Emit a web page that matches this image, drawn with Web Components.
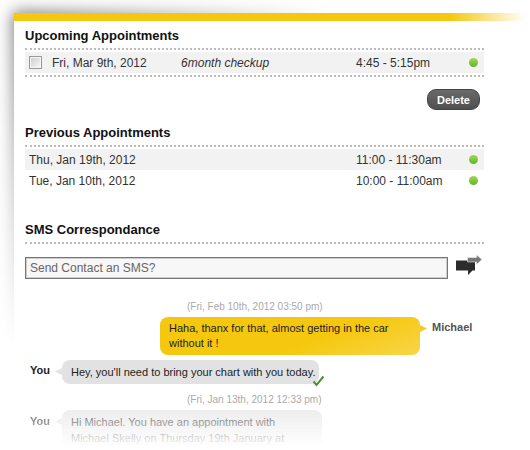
<!DOCTYPE html>
<html lang="en">
<head>
<meta charset="utf-8">
<title>Appointments</title>
<style>
    body {
        margin: 0;
        background: #fff;
        color: #333;
        font: 12px/20px "Liberation Sans", Arial, sans-serif;
    }
</style>
</head>
<body>
<contact-panel>
    <panel-section heading="Upcoming Appointments">
        <appointment-table list="upcoming"></appointment-table>
        <pill-button slot="footer">Delete</pill-button>
    </panel-section>
    <panel-section heading="Previous Appointments">
        <appointment-table list="previous"></appointment-table>
    </panel-section>
    <panel-section heading="SMS Correspondance">
        <sms-form></sms-form>
        <message-thread>
            <chat-message side="right" sender="Michael" time="(Fri, Feb 10th, 2012 03:50 pm)">Haha, thanx for that, almost getting in the car without it !</chat-message>
            <chat-message sender="You" delivered>Hey, you'll need to bring your chart with you today.</chat-message>
            <chat-message sender="You" time="(Fri, Jan 13th, 2012 12:33 pm)" old>Hi Michael. You have an appointment with Michael Skelly on Thursday 19th January at</chat-message>
        </message-thread>
    </panel-section>
</contact-panel>

<script>
const appointments = {
    upcoming: [
        { date: 'Fri, Mar 9th, 2012', note: '6month checkup', time: '4:45 - 5:15pm' }
    ],
    previous: [
        { date: 'Thu, Jan 19th, 2012', note: '', time: '11:00 - 11:30am' },
        { date: 'Tue, Jan 10th, 2012', note: '', time: '10:00 - 11:00am' }
    ]
};

class ContactPanel extends HTMLElement {
    constructor() {
        super();
        this.attachShadow({ mode: 'open' });
    }

    connectedCallback() {
        this.shadowRoot.innerHTML = `
            <style>
                :host {
                    display: block;
                    position: relative;
                    padding: 13px 0 0 14px;
                }

                /* soft shadow that fades out to the right and the bottom */
                .shade {
                    position: absolute;
                    inset: 0;
                    z-index: -1;
                    padding: 13px 0 0 14px;
                    overflow: hidden;
                    mask: linear-gradient(to right, #000 20px, transparent 330px), linear-gradient(#000 20px, transparent 345px);
                    mask-composite: intersect;
                }

                .shade::before {
                    content: "";
                    display: block;
                    height: 100%;
                    margin-right: -20px;
                    border-radius: 4px 0 0 0;
                    background: #fff;
                    box-shadow: 0 0 16px 2px rgba(0, 0, 0, 0.5);
                }

                .bar {
                    height: 8px;
                    background: linear-gradient(to right, #f5c80f calc(100% - 80px), #fff calc(100% - 4px));
                }

                .body {
                    padding: 5px 46px 0 11px;
                    background: #fff;
                }
            </style>
            <div class="shade"></div>
            <div class="bar"></div>
            <div class="body"><slot></slot></div>
        `;
    }
}

class PanelSection extends HTMLElement {
    constructor() {
        super();
        this.attachShadow({ mode: 'open' });
    }

    connectedCallback() {
        this.shadowRoot.innerHTML = `
            <style>
                :host {
                    display: block;
                    min-height: 97px;
                }

                h2 {
                    margin: 0;
                    padding-bottom: 2px;
                    color: #111;
                    font-size: 13px;
                    font-weight: bold;
                    line-height: 20px;
                }

                .content {
                    border-top: 2px dotted #bbb;
                }

                ::slotted([slot="footer"]) {
                    display: flex;
                    justify-content: flex-end;
                    padding: 12px 4px 0 0;
                }
            </style>
            <h2>${this.getAttribute('heading') || ''}</h2>
            <div class="content"><slot></slot></div>
            <slot name="footer"></slot>
        `;
    }
}

class AppointmentTable extends HTMLElement {
    constructor() {
        super();
        this.attachShadow({ mode: 'open' });
    }

    connectedCallback() {
        const list = this.getAttribute('list');
        const upcoming = list === 'upcoming';
        const rows = appointments[list].map((item, i) => `
            <tr>
                <td class="date">
                    <div class="day">
                        ${upcoming ? `<input type="checkbox" id="pick${i}">` : ''}
                        ${upcoming ? `<label for="pick${i}">${item.date}</label>` : `<span>${item.date}</span>`}
                    </div>
                </td>
                <td class="note">${item.note}</td>
                <td class="time">${item.time}</td>
                <td class="state"><i></i></td>
            </tr>`).join('');

        this.shadowRoot.innerHTML = `
            <style>
                :host {
                    display: block;
                    padding: 2px 0;
                }

                :host([list="upcoming"]) {
                    border-bottom: 2px dotted #bbb;
                }

                table {
                    width: 100%;
                    border-collapse: collapse;
                    table-layout: fixed;
                }

                td {
                    height: 21px;
                    padding: 0;
                }

                tr:nth-child(odd) {
                    background: #f2f2f2;
                }

                .date { width: 34%; }
                .time { width: 113px; }
                .state { width: 12px; padding-right: 3px; }
                .note { font-style: italic; }

                .day {
                    display: flex;
                    align-items: center;
                    gap: 10px;
                    padding-left: 4px;
                }

                input {
                    appearance: none;
                    width: 13px;
                    height: 13px;
                    margin: 0;
                    border: 1px solid #999;
                    background: linear-gradient(135deg, #ccc, #fafafa);
                    box-shadow: inset 0 0 0 1px #f4f4f4;
                }

                i {
                    display: block;
                    width: 9px;
                    height: 9px;
                    border-radius: 50%;
                    background: linear-gradient(#a3d84e, #5fb62c);
                }
            </style>
            <table>${rows}</table>
        `;
    }
}

class PillButton extends HTMLElement {
    constructor() {
        super();
        this.attachShadow({ mode: 'open' });
    }

    connectedCallback() {
        this.shadowRoot.innerHTML = `
            <style>
                :host {
                    display: block;
                }

                button {
                    display: block;
                    height: 21px;
                    padding: 0 9px;
                    border: 1px solid #444;
                    border-radius: 9px;
                    background: linear-gradient(#6a6a6a, #505050);
                    color: #fff;
                    font: bold 11px/18px "Liberation Sans", Arial, sans-serif;
                }
            </style>
            <button type="button"><slot></slot></button>
        `;
    }
}

class SmsForm extends HTMLElement {
    constructor() {
        super();
        this.attachShadow({ mode: 'open' });
    }

    connectedCallback() {
        this.shadowRoot.innerHTML = `
            <style>
                :host {
                    display: block;
                    padding-top: 10px;
                }

                form {
                    display: flex;
                    align-items: center;
                    gap: 7px;
                    padding-right: 2px;
                }

                input {
                    flex: 1;
                    min-width: 0;
                    box-sizing: border-box;
                    height: 22px;
                    padding: 0 4px;
                    border: 1px solid #777;
                    border-radius: 0;
                    outline: 0;
                    background: #f7f7f7;
                    box-shadow: inset 0 0 0 1px #ccc;
                    font: inherit;
                }

                input::placeholder {
                    color: #666;
                    opacity: 1;
                }

                button {
                    padding: 0;
                    border: 0;
                    background: none;
                }

                svg {
                    display: block;
                }
            </style>
            <form>
                <input type="text" aria-label="SMS message" placeholder="Send Contact an SMS?">
                <button type="button" aria-label="Send">
                    <svg width="27" height="28" viewBox="0 0 27 28">
                        <path d="M1 6.500h19v10h-2.500L13 21v-4.500H1z" fill="#2c2c2c"/>
                        <path d="M12.500 3.500h9V.800L27 5.600l-5.500 4.800V8h-9z" fill="#777" stroke="#fff" stroke-width=".5"/>
                    </svg>
                </button>
            </form>
        `;
    }
}

class MessageThread extends HTMLElement {
    constructor() {
        super();
        this.attachShadow({ mode: 'open' });
    }

    connectedCallback() {
        this.shadowRoot.innerHTML = `
            <style>
                :host {
                    display: flex;
                    flex-direction: column;
                    gap: 5px;
                    padding: 14px 8px 0 0;
                }
            </style>
            <slot></slot>
        `;
    }
}

class ChatMessage extends HTMLElement {
    constructor() {
        super();
        this.attachShadow({ mode: 'open' });
    }

    connectedCallback() {
        const time = this.getAttribute('time');
        const tick = `
            <svg class="tick" width="13" height="12" viewBox="0 0 13 12">
                <path d="M1.500 6.500 4.500 10 11.500 1.500" fill="none" stroke="#4f8f35" stroke-width="2"/>
            </svg>`;

        this.shadowRoot.innerHTML = `
            <style>
                :host {
                    display: block;
                    font-size: 11px;
                    line-height: 15px;
                    color: #222;
                }

                .time {
                    padding: 4px 0 3px 162px;
                    color: #aaa;
                    font-size: 10px;
                    line-height: 14px;
                }

                .line {
                    display: flex;
                    align-items: flex-start;
                }

                .sender {
                    width: 25px;
                    padding: 3px 0 0 5px;
                    font-weight: bold;
                }

                .arrow {
                    width: 7px;
                    height: 7px;
                    margin-top: 8px;
                    background: #e2e2e2;
                    clip-path: polygon(0 50%, 100% 0, 100% 100%);
                }

                .bubble {
                    position: relative;
                    box-sizing: border-box;
                    max-width: 260px;
                    padding: 4px 9px;
                    border-radius: 8px;
                    background: #e2e2e2;
                }

                .tick {
                    position: absolute;
                    right: -6px;
                    bottom: -3px;
                }

                :host([delivered]) .bubble {
                    max-width: none;
                    padding: 5px 4px 4px 9px;
                    white-space: nowrap;
                }

                :host([side="right"]) .line {
                    flex-direction: row-reverse;
                }

                :host([side="right"]) .sender {
                    width: 44px;
                    color: #555;
                }

                :host([side="right"]) .arrow {
                    background: #f5cc1f;
                    clip-path: polygon(0 0, 100% 50%, 0 100%);
                }

                :host([side="right"]) .bubble {
                    background: linear-gradient(160deg, #f5c80f 60%, #f8d548);
                }

                /* older messages fade into the page */
                :host([old]) .line {
                    line-height: 16px;
                    opacity: 0.7;
                    mask: linear-gradient(#000, transparent);
                }

                :host([old]) .bubble {
                    padding-bottom: 2px;
                    background: #e6e6e6;
                }
            </style>
            ${time ? `<div class="time">${time}</div>` : ''}
            <div class="line">
                <div class="sender">${this.getAttribute('sender')}</div>
                <div class="arrow"></div>
                <div class="bubble"><slot></slot>${this.hasAttribute('delivered') ? tick : ''}</div>
            </div>
        `;
    }
}

customElements.define('contact-panel', ContactPanel);
customElements.define('panel-section', PanelSection);
customElements.define('appointment-table', AppointmentTable);
customElements.define('pill-button', PillButton);
customElements.define('sms-form', SmsForm);
customElements.define('message-thread', MessageThread);
customElements.define('chat-message', ChatMessage);
</script>
</body>
</html>
